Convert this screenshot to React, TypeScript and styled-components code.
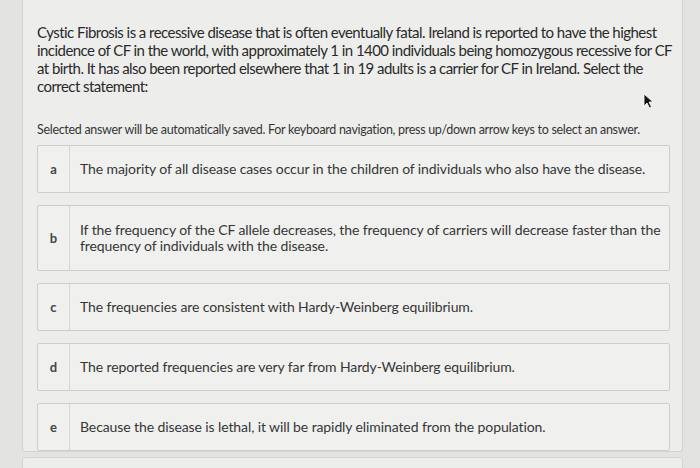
import styled, { createGlobalStyle } from 'styled-components'

const GlobalStyle = createGlobalStyle`
  html, body {
    margin: 0;
    padding: 0;
    background: #e3e4e2;
    font-family: Lato, "Open Sans", sans-serif;
    color: #2f2f2f;
  }
`

const Page = styled.div`
  width: 700px;
  height: 468px;
  overflow: hidden;
  padding: 0 17px 0 22px;
  box-sizing: border-box;
  display: flex;
  flex-direction: column;
  gap: 5px;
`

const Card = styled.div`
  position: relative;
  flex: none;
  height: 452px;
  box-sizing: border-box;
  background: #edeeec;
  border: 1px solid #d3d4d2;
  border-top: none;
  border-radius: 0 0 3px 3px;
  padding: 23px 12px 0 14px;
  display: flex;
  flex-direction: column;
`

const NextCard = styled.div`
  flex: none;
  height: 40px;
  background: #eceeec;
  border: 1px solid #d3d4d2;
  border-radius: 3px;
`

const Question = styled.p`
  margin: 0;
  font-size: 15px;
  line-height: 18px;
  letter-spacing: -0.55px;
  white-space: nowrap;
  color: #2a2a2a;
`

const Hint = styled.p`
  margin: 27px 0 0;
  font-size: 12.5px;
  line-height: 16px;
  letter-spacing: -0.3px;
  white-space: nowrap;
  color: #353535;
`

const Options = styled.div`
  margin-top: 7px;
  display: flex;
  flex-direction: column;
  gap: 12px;
`

const Option = styled.div`
  display: flex;
  align-items: stretch;
  background: #f0f1ef;
  border: 1px solid #cdcecc;
  border-radius: 2px;
  min-height: 48px;
  box-sizing: border-box;
  cursor: pointer;
`

const Letter = styled.div`
  flex: none;
  width: 31px;
  border-right: 1px solid #d6d7d5;
  display: flex;
  align-items: center;
  justify-content: center;
  font-size: 13px;
  font-weight: 700;
  color: #454545;
`

const Label = styled.div<{ $tall?: boolean }>`
  flex: 1;
  display: flex;
  align-items: center;
  padding: ${(p) => (p.$tall ? '16px' : '15px')} 10px;
  font-size: 14px;
  line-height: 16px;
  letter-spacing: -0.1px;
  white-space: nowrap;
  color: #363636;
`

const Pointer = styled.svg`
  position: absolute;
  left: 620px;
  top: 93px;
`

const answers = [
  { key: 'a', text: 'The majority of all disease cases occur in the children of individuals who also have the disease.' },
  {
    key: 'b',
    text: 'If the frequency of the CF allele decreases, the frequency of carriers will decrease faster than the',
    more: 'frequency of individuals with the disease.',
  },
  { key: 'c', text: 'The frequencies are consistent with Hardy-Weinberg equilibrium.' },
  { key: 'd', text: 'The reported frequencies are very far from Hardy-Weinberg equilibrium.' },
  { key: 'e', text: 'Because the disease is lethal, it will be rapidly eliminated from the population.' },
]

export default function App() {
  return (
    <>
      <GlobalStyle />
      <Page>
        <Card>
          <Question>
            Cystic Fibrosis is a recessive disease that is often eventually fatal. Ireland is reported to have the highest
            <br />
            incidence of CF in the world, with approximately 1 in 1400 individuals being homozygous recessive for CF
            <br />
            at birth. It has also been reported elsewhere that 1 in 19 adults is a carrier for CF in Ireland. Select the
            <br />
            correct statement:
          </Question>
          <Pointer width="12" height="16" viewBox="0 0 12 16">
            <path d="M1 1 L1 13 L4 10 L6.5 15 L8.5 14 L6 9 L10 9 Z" fill="#111" stroke="#fff" strokeWidth="0.8" />
          </Pointer>
          <Hint>
            Selected answer will be automatically saved. For keyboard navigation, press up/down arrow keys to select an answer.
          </Hint>
          <Options>
            {answers.map((a) => (
              <Option key={a.key}>
                <Letter>{a.key}</Letter>
                <Label $tall={!!a.more}>
                  <span>
                    {a.text}
                    {a.more && (
                      <>
                        <br />
                        {a.more}
                      </>
                    )}
                  </span>
                </Label>
              </Option>
            ))}
          </Options>
        </Card>
        <NextCard />
      </Page>
    </>
  )
}
